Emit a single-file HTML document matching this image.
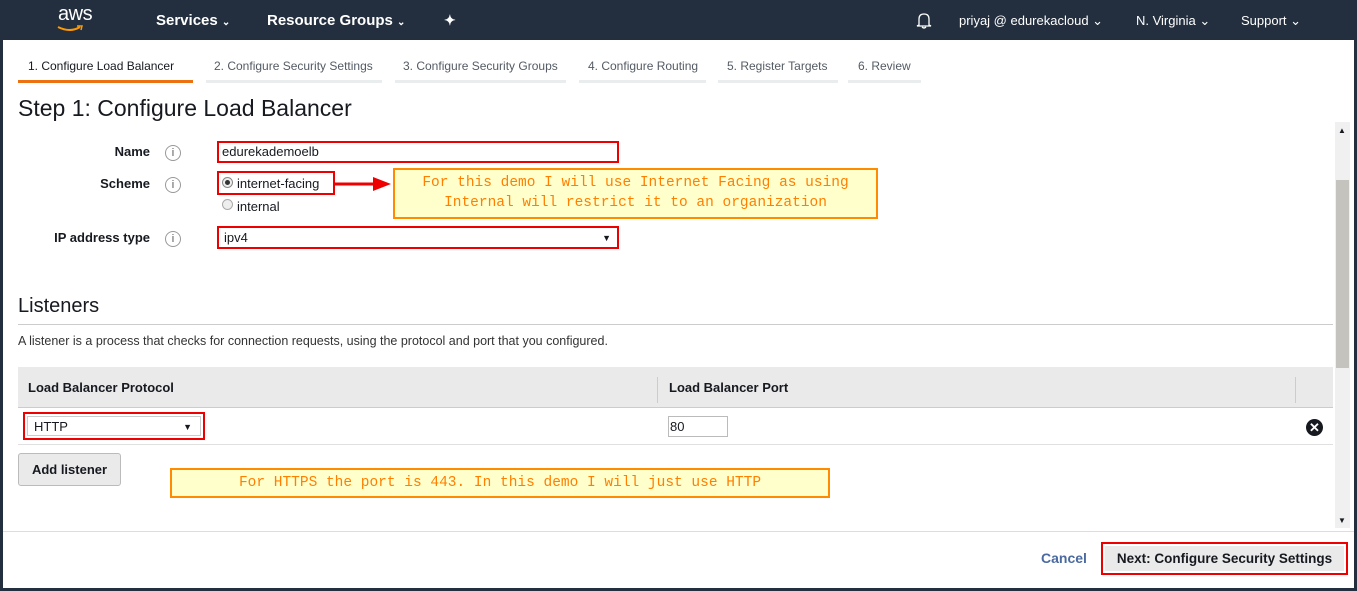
<!DOCTYPE html>
<html><head><meta charset="utf-8"><style>
*{margin:0;padding:0;box-sizing:border-box}
body{width:1357px;height:591px;overflow:hidden;background:#232f3e;font-family:"Liberation Sans",Arial,sans-serif;position:relative;color:#16191f}
.a{position:absolute}
.main{left:3px;top:40px;width:1351px;height:548px;background:#fff}
.nav{color:#fff;font-weight:bold;font-size:15px;top:12px}
.nav2{color:#fff;font-size:13px;top:13px}
.tab{top:59px;font-size:12px;color:#545b64}
.tabl{top:80px;height:3px;background:#eaeded}
.lbl{font-size:13px;font-weight:bold;text-align:right;width:140px;left:10px}
.info{width:16px;height:16px;border:1px solid #999;border-radius:50%;font-size:11px;text-align:center;line-height:14px;color:#555;left:165px}
.red{border:2px solid #e00}
.call{background:#ffffcc;border:2px solid #ff8c00;color:#ff7f00;font-family:"Liberation Mono",monospace;font-size:14.5px;text-align:center;line-height:20px}
</style></head><body>
<div class="a" style="left:58px;top:3px;color:#fff;font-size:20px;letter-spacing:-0.5px">aws</div>
<svg class="a" style="left:56px;top:24px" width="28" height="10"><path d="M2 3 Q14 9 24 3" stroke="#f90" stroke-width="2" fill="none"/><path d="M21 2 L26 2 L25 6" stroke="#f90" stroke-width="1.5" fill="none"/></svg>
<div class="a nav" style="left:156px">Services <span style="font-size:10px">⌄</span></div>
<div class="a nav" style="left:267px">Resource Groups <span style="font-size:10px">⌄</span></div>
<div class="a nav" style="left:444px;font-size:14px">✦</div>
<svg class="a" style="left:915px;top:11px" width="18" height="18"><path d="M4 14 L4 8 Q4 3 9 3 Q14 3 14 8 L14 14 L16 15 L2 15 Z M7 16 Q9 18 11 16" stroke="#fff" fill="none" stroke-width="1.3"/></svg>
<div class="a nav2" style="left:959px">priyaj @ edurekacloud ⌄</div>
<div class="a nav2" style="left:1136px">N. Virginia ⌄</div>
<div class="a nav2" style="left:1241px">Support ⌄</div>
<div class="a main"></div>
<div class="a tab" style="left:28px;color:#16191f">1. Configure Load Balancer</div>
<div class="a tabl" style="left:18px;width:175px;background:#ec7211"></div>
<div class="a tab" style="left:214px">2. Configure Security Settings</div><div class="a tabl" style="left:206px;width:176px"></div>
<div class="a tab" style="left:403px">3. Configure Security Groups</div><div class="a tabl" style="left:395px;width:171px"></div>
<div class="a tab" style="left:588px">4. Configure Routing</div><div class="a tabl" style="left:579px;width:127px"></div>
<div class="a tab" style="left:727px">5. Register Targets</div><div class="a tabl" style="left:718px;width:120px"></div>
<div class="a tab" style="left:858px">6. Review</div><div class="a tabl" style="left:848px;width:73px"></div>
<div class="a" style="left:18px;top:95px;font-size:23px;color:#16191f">Step 1: Configure Load Balancer</div>
<div class="a lbl" style="top:144px">Name</div><div class="a info" style="top:145px">i</div>
<div class="a red" style="left:217px;top:141px;width:402px;height:22px;font-size:13px;padding:1px 3px">edurekademoelb</div>
<div class="a lbl" style="top:176px">Scheme</div><div class="a info" style="top:177px">i</div>
<div class="a red" style="left:217px;top:171px;width:118px;height:24px"></div>
<div class="a" style="left:222px;top:177px;width:11px;height:11px;border:1px solid #888;border-radius:50%;background:#eee"><div style="width:5px;height:5px;background:#333;border-radius:50%;margin:2px"></div></div>
<div class="a" style="left:237px;top:176px;font-size:13px">internet-facing</div>
<div class="a" style="left:222px;top:199px;width:11px;height:11px;border:1px solid #aaa;border-radius:50%;background:#eee"></div>
<div class="a" style="left:237px;top:199px;font-size:13px">internal</div>
<svg class="a" style="left:335px;top:177px" width="58" height="15"><line x1="0" y1="7" x2="40" y2="7" stroke="#e00" stroke-width="3"/><path d="M38 0 L56 7 L38 14 Z" fill="#e00"/></svg>
<div class="a call" style="left:393px;top:168px;width:485px;height:51px;padding-top:3px">For this demo I will use Internet Facing as using<br>Internal will restrict it to an organization</div>
<div class="a lbl" style="top:230px">IP address type</div><div class="a info" style="top:231px">i</div>
<div class="a red" style="left:217px;top:226px;width:402px;height:23px;font-size:13px;padding:2px 5px">ipv4<span style="position:absolute;right:6px;font-size:9px;top:5px">▼</span></div>
<div class="a" style="left:18px;top:295px;font-size:20px">Listeners</div>
<div class="a" style="left:18px;top:324px;width:1315px;height:1px;background:#ccc"></div>
<div class="a" style="left:18px;top:334px;font-size:12.5px;color:#333">A listener is a process that checks for connection requests, using the protocol and port that you configured.</div>
<div class="a" style="left:18px;top:367px;width:1315px;height:41px;background:#eaeaea;border-bottom:1px solid #ccc"></div>
<div class="a" style="left:657px;top:377px;width:1px;height:26px;background:#ccc"></div>
<div class="a" style="left:1295px;top:377px;width:1px;height:26px;background:#ccc"></div>
<div class="a" style="left:28px;top:380px;font-size:13px;font-weight:bold">Load Balancer Protocol</div>
<div class="a" style="left:669px;top:380px;font-size:13px;font-weight:bold">Load Balancer Port</div>
<div class="a" style="left:18px;top:444px;width:1315px;height:1px;background:#e0e0e0"></div>
<div class="a red" style="left:23px;top:412px;width:182px;height:28px;padding:2px"><div style="border:1px solid #ccc;height:20px;font-size:13px;padding:2px 6px;position:relative">HTTP<span style="position:absolute;right:8px;font-size:9px;top:5px">▼</span></div></div>
<div class="a" style="left:668px;top:416px;width:60px;height:21px;border:1px solid #bbb;font-size:13px;padding:2px 1px">80</div>
<div class="a" style="left:1306px;top:419px;width:17px;height:17px;border-radius:50%;background:#16191f;color:#fff;font-size:13px;font-weight:bold;text-align:center;line-height:17px">✕</div>
<div class="a" style="left:18px;top:453px;width:103px;height:33px;border:1px solid #bbb;border-radius:3px;background:#eaeaea;font-size:13px;font-weight:bold;text-align:center;line-height:31px">Add listener</div>
<div class="a call" style="left:170px;top:468px;width:660px;height:30px;line-height:26px">For HTTPS the port is 443. In this demo I will just use HTTP</div>
<div class="a" style="left:1335px;top:122px;width:15px;height:406px;background:#f0f0f0"></div>
<div class="a" style="left:1336px;top:180px;width:13px;height:188px;background:#c4c3be"></div>
<div class="a" style="left:1338px;top:126px;font-size:8px">▲</div>
<div class="a" style="left:1338px;top:516px;font-size:8px">▼</div>
<div class="a" style="left:3px;top:531px;width:1351px;height:1px;background:#ddd"></div>
<div class="a" style="left:1041px;top:550px;font-size:14px;font-weight:bold;color:#4a6aa0">Cancel</div>
<div class="a red" style="left:1101px;top:542px;width:247px;height:33px;padding:2px"><div style="background:#eaeaea;height:25px;font-size:13.5px;font-weight:bold;text-align:center;line-height:25px">Next: Configure Security Settings</div></div>
</body></html>
